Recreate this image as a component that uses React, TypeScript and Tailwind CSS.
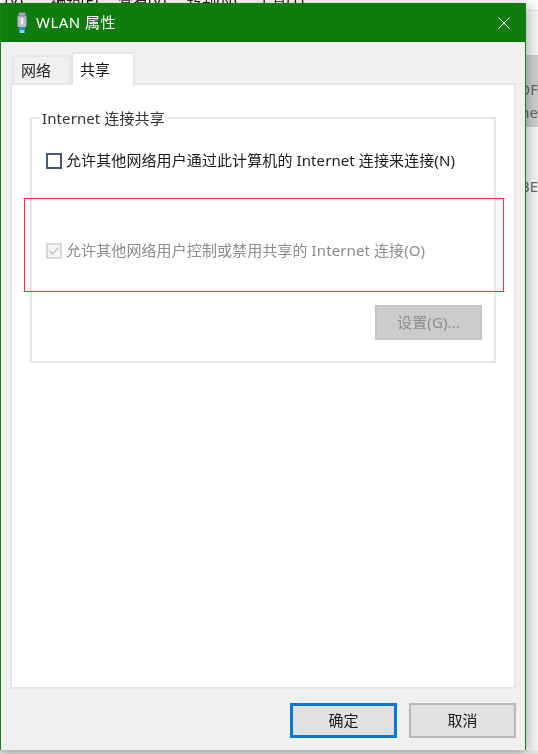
const font = '[font-family:"Noto_Sans","Noto_Sans_CJK_SC",sans-serif]'

function AdapterIcon() {
  return (
    <svg width="12" height="21" viewBox="0 0 12 21" className="shrink-0">
      <rect x="2.5" y="0.5" width="7" height="4" rx="1" fill="#9aa6ae" stroke="#6f7b84" strokeWidth="0.6" />
      <path d="M1.5 4h9v10l-1.5 1.5H3L1.5 14z" fill="#b4bec6" stroke="#76828b" strokeWidth="0.7" />
      <rect x="4.8" y="5.5" width="2.4" height="7" fill="#f2f5f7" />
      <rect x="3" y="15.5" width="6" height="2.5" fill="#2f8fd0" />
      <rect x="3.5" y="18" width="5" height="3" fill="#8fd0f2" />
    </svg>
  )
}

function CheckBox({ disabled }: { disabled?: boolean }) {
  if (disabled) {
    return (
      <span className="flex h-4 w-4 shrink-0 items-center justify-center border-2 border-[#d8d8d8] bg-[#f4f4f4]">
        <svg width="14" height="14" viewBox="0 0 14 14" fill="none">
          <path d="M2 7l3.5 3.5L12 3" stroke="#bdbdbd" strokeWidth="1.5" />
        </svg>
      </span>
    )
  }
  return <span className="h-4 w-4 shrink-0 border-2 border-[#46567a] bg-white" />
}

export default function App() {
  return (
    <div className={`relative h-[754px] w-[538px] overflow-hidden text-[15px] ${font}`}>
      <div className="flex h-full flex-col bg-[#f2f2f2] blur-[0.35px]">
        {/* menu of the window behind, almost fully covered */}
        <div className="flex h-[3px] shrink-0 items-end gap-[20px] overflow-hidden whitespace-nowrap bg-white pl-[5px] text-[#222]">
          <span className="h-[3px] leading-[0px]">(V)</span>
          <span className="ml-[8px] h-[3px] leading-[0px]">编辑(E)</span>
          <span className="h-[3px] leading-[0px]">查看(V)</span>
          <span className="h-[3px] leading-[0px]">转到(N)</span>
          <span className="h-[3px] leading-[0px]">工具(T)</span>
        </div>

        <div className="flex h-[747px] shrink-0">
          {/* dialog */}
          <div className="relative z-10 flex w-[526px] shrink-0 flex-col border-x border-x-[#1b7f1b] bg-[#f0f0f0] shadow-[0_2px_12px_rgba(0,0,0,0.35)]">
            <div className="flex h-[39px] shrink-0 items-center bg-[#107c10] pl-[15px] pr-[15px] text-white">
              <AdapterIcon />
              <span className="ml-[8px] text-[15px] tracking-[0.45px]">WLAN 属性</span>
              <svg width="12" height="12" viewBox="0 0 12 12" className="ml-auto" fill="none">
                <path d="M0.5 0.5l11 11M11.5 0.5l-11 11" stroke="#fff" strokeWidth="1" />
              </svg>
            </div>

            <div className="flex h-[41px] shrink-0 items-end pl-[11px]">
              <div className="flex h-[28px] w-[59px] items-center border-2 border-b-0 border-[#e6e6e6] pl-[7px] text-[#222]">网络</div>
              <div className="z-10 -mb-[2px] flex h-[33px] w-[64px] items-center border-2 border-b-0 border-[#e6e6e6] bg-white pl-[7px] text-[#111]">共享</div>
            </div>

            <div className="h-[606px] shrink-0 mx-[9px] border-2 border-[#e6e6e6] bg-white px-[18px] pt-[32px] tracking-[0.1px]">
              <div className="h-[246px] border-2 border-[#e6e6e6] px-[14px]">
                <div className="-mt-[12px] -ml-[6px] w-fit bg-white px-[2px] text-[#333]">Internet 连接共享</div>
                <div className="mt-[20px] flex h-[22px] items-center gap-[4px] text-[#1a1a1a]">
                  <CheckBox />
                  <span>允许其他网络用户通过此计算机的 Internet 连接来连接(N)</span>
                </div>
                <div className="mt-[68px] flex h-[22px] items-center gap-[4px] text-[#8c8c8c]">
                  <CheckBox disabled />
                  <span>允许其他网络用户控制或禁用共享的 Internet 连接(O)</span>
                </div>
                <div className="-mr-[2px] mt-[43px] flex justify-end">
                  <div className="flex h-[35px] w-[107px] items-center justify-center border-2 border-[#c4c4c4] bg-[#cccccc] text-[#8f8f8f]">设置(G)...</div>
                </div>
              </div>
            </div>

            <div className="flex flex-1 justify-end gap-[12px] pr-[9px] pt-[14px] text-[#1a1a1a]">
              <div className="flex h-[35px] w-[107px] items-center justify-center border-[3px] border-[#0078d7] bg-[#e1e1e1]">确定</div>
              <div className="flex h-[35px] w-[107px] items-center justify-center border-2 border-[#b8b8b8] bg-[#e1e1e1]">取消</div>
            </div>
          </div>

          {/* window behind, right edge */}
          <div className="flex min-w-0 flex-1 flex-col overflow-hidden whitespace-nowrap text-[15px] text-[#666]">
            <div className="h-[7px] shrink-0 bg-[#fafafa]" />
            <div className="h-[45px] shrink-0 border-t border-[#e4e4e4] bg-[#f2f2f2]" />
            <div className="flex h-[72px] shrink-0 flex-col items-end bg-[#cbcbcb] pt-[23px] leading-[23px]">
              <span>OF</span>
              <span>ne</span>
            </div>
            <div className="flex justify-end pt-[49px] leading-[20px]">BE</div>
          </div>
        </div>

        <div className="h-[4px] shrink-0 bg-[#e4e4e4]" />
      </div>

      {/* annotation drawn over the screenshot */}
      <div className="absolute left-[24px] top-[198px] h-[94px] w-[480px] border border-[#ff3333]" />
    </div>
  )
}
